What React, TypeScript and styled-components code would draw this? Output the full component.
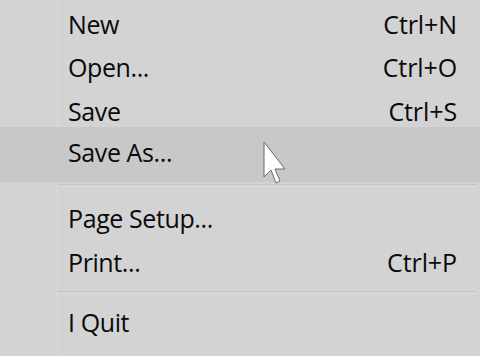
import React from "react";
import styled, { createGlobalStyle } from "styled-components";

const Global = createGlobalStyle`
  html, body { margin: 0; padding: 0; background: #d3d3d3; }
  #root { width: 480px; height: 356px; }
`;

const Menu = styled.div`
  position: relative;
  width: 480px;
  height: 356px;
  box-sizing: border-box;
  padding-top: 2px;
  display: flex;
  flex-direction: column;
  background: #d3d3d3;
  overflow: hidden;
  font-family: "Open Sans", "Noto Sans", sans-serif;
  font-size: 25px;
  color: #0a0a0a;
`;

const Item = styled.div<{ $h: number; $active?: boolean }>`
  flex: none;
  display: grid;
  grid-template-columns: 58px 1fr auto;
  height: ${(p) => p.$h}px;
  background: ${(p) => (p.$active ? "#c8c8c8" : "transparent")};
  line-height: 30px;
`;

const Gutter = styled.div<{ $hidden?: boolean }>`
  border-right: 1px solid ${(p) => (p.$hidden ? "transparent" : "#dadada")};
`;

const Label = styled.div<{ $pt: number }>`
  padding-left: 10px;
  padding-top: ${(p) => p.$pt}px;
  letter-spacing: -0.4px;
  white-space: nowrap;
`;

const Shortcut = styled.div<{ $pt: number }>`
  padding-right: 23px;
  padding-top: ${(p) => p.$pt}px;
  letter-spacing: -0.1px;
  text-align: right;
  white-space: nowrap;
`;

const Separator = styled.div<{ $h: number }>`
  flex: none;
  display: grid;
  grid-template-columns: 58px 1fr;
  height: ${(p) => p.$h}px;
`;

const Rule = styled.div<{ $mt: number }>`
  margin-top: ${(p) => p.$mt}px;
  margin-right: 4px;
  height: 1px;
  border-top: 1px solid #c4c4c4;
  border-bottom: 1px solid #dadada;
`;

const Pointer = styled.svg`
  position: absolute;
  left: 263px;
  top: 141px;
`;

const Entry = ({
  label,
  shortcut,
  h,
  pt,
  active,
}: {
  label: string;
  shortcut?: string;
  h: number;
  pt: number;
  active?: boolean;
}) => (
  <Item $h={h} $active={active}>
    <Gutter $hidden={active} />
    <Label $pt={pt}>{label}</Label>
    <Shortcut $pt={pt}>{shortcut ?? ""}</Shortcut>
  </Item>
);

export default function App() {
  return (
    <>
      <Global />
      <Menu>
        <Entry label="New" shortcut="Ctrl+N" h={43} pt={6.5} />
        <Entry label="Open..." shortcut="Ctrl+O" h={43} pt={7} />
        <Entry label="Save" shortcut="Ctrl+S" h={39} pt={7.5} />
        <Entry label="Save As..." h={55} pt={10} active />
        <Separator $h={8}>
          <Gutter />
          <Rule $mt={2} />
        </Separator>
        <Entry label="Page Setup..." h={44} pt={12.5} />
        <Entry label="Print..." shortcut="Ctrl+P" h={44} pt={13} />
        <Separator $h={26}>
          <Gutter />
          <Rule $mt={13} />
        </Separator>
        <Entry label="I Quit" h={52} pt={2.5} />
        <Pointer width="26" height="46" viewBox="0 0 26 46">
          <polygon
            points="1,1 1,36 8,29 13,42 17,40 12,28 22,28"
            fill="#ffffff"
            stroke="#6a6a6a"
            strokeWidth="1"
            strokeLinejoin="round"
          />
        </Pointer>
      </Menu>
    </>
  );
}
